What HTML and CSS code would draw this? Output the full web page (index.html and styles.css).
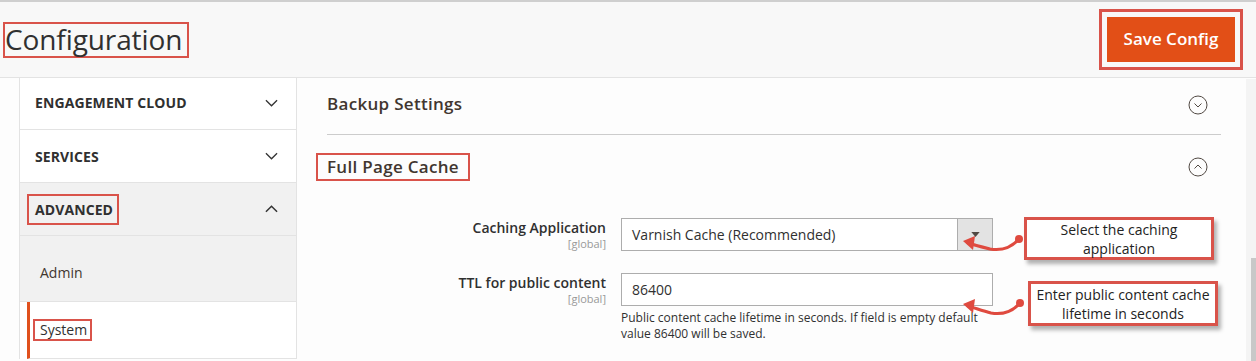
FILE: index.html
```html
<!DOCTYPE html>
<html>
<head>
<meta charset="utf-8">
<link rel="stylesheet" href="styles.css">
</head>
<body>
<div class="page">
  <header class="header">
    <h1 class="title"><span class="mark">Configuration</span></h1>
    <div class="btn-mark"><button class="save">Save Config</button></div>
  </header>
  <div class="main">
    <nav class="sidebar">
      <div class="tab"><span>ENGAGEMENT CLOUD</span><svg class="chev" viewBox="0 0 14 8"><path d="M1 1l6 6 6-6" fill="none" stroke="#333" stroke-width="1.4"/></svg></div>
      <div class="tab"><span>SERVICES</span><svg class="chev" viewBox="0 0 14 8"><path d="M1 1l6 6 6-6" fill="none" stroke="#333" stroke-width="1.4"/></svg></div>
      <div class="tab tab-open"><span class="mark mark-adv">ADVANCED</span><svg class="chev" viewBox="0 0 14 8"><path d="M1 7l6-6 6 6" fill="none" stroke="#333" stroke-width="1.6"/></svg></div>
      <div class="item">Admin</div>
      <div class="item item-active"><span class="mark mark-sys">System</span></div>
    </nav>
    <section class="content">
      <div class="section">
        <span class="sec-title">Backup Settings</span>
        <svg class="circ" viewBox="0 0 20 20"><circle cx="10" cy="10" r="9" fill="none" stroke="#514943" stroke-width="1"/><path d="M6.5 8.5l3.5 3.5 3.5-3.5" fill="none" stroke="#514943" stroke-width="1"/></svg>
      </div>
      <div class="section section-open">
        <span class="sec-title mark mark-fpc">Full Page Cache</span>
        <svg class="circ" viewBox="0 0 20 20"><circle cx="10" cy="10" r="9" fill="none" stroke="#514943" stroke-width="1"/><path d="M6.5 11.5l3.5-3.5 3.5 3.5" fill="none" stroke="#514943" stroke-width="1"/></svg>
      </div>
      <div class="form">
        <div class="row">
          <div class="label"><span class="lbl">Caching Application</span><span class="scope">[global]</span></div>
          <div class="control">
            <div class="select"><span class="sel-text">Varnish Cache (Recommended)</span><span class="sel-btn"><svg viewBox="0 0 10 6" width="9" height="5"><path d="M0 0h10L5 6z" fill="#514943"/></svg></span></div>
          </div>
        </div>
        <div class="row">
          <div class="label"><span class="lbl">TTL for public content</span><span class="scope">[global]</span></div>
          <div class="control">
            <div class="input">86400</div>
            <p class="note">Public content cache lifetime in seconds. If field is empty default value 86400 will be saved.</p>
          </div>
        </div>
        <div class="callout callout-1">Select the caching<br>application</div>
        <div class="callout callout-2">Enter public content cache<br>lifetime in seconds</div>
        <svg class="arrows" viewBox="0 0 80 120" width="80" height="120">
          <g fill="none" stroke="#df4a3f" stroke-width="3" stroke-linecap="round">
            <path d="M59 22 C52 30 42 34 30 32 C22 30 14 28 8 26"/>
            <path d="M60 86 C53 94 43 98 31 96 C23 94 15 91 8 89"/>
          </g>
          <g fill="#df4a3f">
            <circle cx="59" cy="22" r="4"/>
            <circle cx="60" cy="86" r="4"/>
            <path d="M3 24 L15 19 L13 33 Z"/>
            <path d="M3 87 L15 82 L13 96 Z"/>
          </g>
        </svg>
      </div>
    </section>
    <div class="scrollbar"><div class="thumb"></div></div>
  </div>
</div>
</body>
</html>
```
FILE: styles.css
```css
* { box-sizing: border-box; }
html, body { margin: 0; padding: 0; }
body {
  font-family: "Open Sans", "Noto Sans", sans-serif;
  color: #303030;
  background: #fdfdfd;
  width: 1256px;
  height: 361px;
  overflow: hidden;
}
.page { position: relative; }
.mark { border: 2px solid #d9534a; }
.header {
  border-top: 2px solid #cfcfcf;
  background: #f8f8f8;
  height: 78px;
  border-bottom: 1px solid #e3e3e3;
  display: flex;
  justify-content: space-between;
  align-items: flex-start;
}
.title {
  margin: 20px 0 0 3px;
  font-size: 28px;
  font-weight: 400;
  line-height: 1;
  color: #303030;
}
.title .mark {
  display: inline-block;
  padding: 2px 5px 4px 0;
  line-height: 26px;
  letter-spacing: -0.1px;
}
.btn-mark {
  margin: 7px 13px 0 0;
  border: 3px solid #d9534a;
  padding: 5px 5px;
}
.save {
  display: block;
  width: 128px;
  height: 45px;
  border: 0;
  background: #e24f17;
  color: #fff;
  font-family: "Open Sans", sans-serif;
  font-weight: 600;
  font-size: 17px;
  padding: 0 0 2px;
}
.main { display: flex; align-items: flex-start; height: 283px; }
.sidebar {
  margin-left: 19px;
  width: 278px;
  background: #fff;
  border-left: 1px solid #e3e3e3;
  border-right: 1px solid #e3e3e3;
}
.tab {
  height: 53px;
  border-bottom: 1px solid #e3e3e3;
  display: flex;
  align-items: center;
  justify-content: space-between;
  padding: 0 18px 0 15px;
  font-weight: 700;
  font-size: 14px;
  letter-spacing: 0.1px;
}
.tab:first-child { height: 52px; padding-bottom: 2px; }
.tab-open { background: #f1f1f1; }
.mark-adv { padding: 4px 4px 4px 6px; margin-left: -8px; }
.chev { width: 13px; height: 8px; }
.item {
  height: 66px;
  display: flex;
  align-items: center;
  padding-left: 20px;
  padding-top: 8px;
  font-size: 14px;
  background: #f1f1f1;
  border-bottom: 1px solid #e3e3e3;
  color: #41362f;
}
.item-active {
  background: #fff;
  border-left: 3px solid #e0501d;
  margin-left: 7px;
  padding-left: 3px;
  padding-top: 0;
  height: 57px;
  color: #303030;
}
.mark-sys { padding: 0 3px 0 5px; line-height: 18px; }
.content {
  position: relative;
  margin-left: 30px;
  width: 894px;
}
.section {
  display: flex;
  align-items: center;
  justify-content: space-between;
  height: 57px;
  border-bottom: 1px solid #cccccc;
  padding-right: 13px;
}
.section:first-child .sec-title { margin-top: -5px; }
.section:first-child .circ { margin-top: -2px; }
.section-open { border-bottom: 0; height: 64px; align-items: center; }
.sec-title {
  font-size: 17px;
  font-weight: 600;
  color: #41362f;
  letter-spacing: 0.3px;
}
.mark-fpc { margin-left: -11px; padding: 0 9px 1px 9px; margin-top: 0; }
.section-open .circ { margin-top: 0; }
.circ { width: 20px; height: 20px; }
.form { position: relative; padding-top: 19px; }
.row {
  display: grid;
  grid-template-columns: 279px 372px;
  column-gap: 15px;
  margin-bottom: 22px;
}
.label {
  display: flex;
  flex-direction: column;
  align-items: flex-end;
  padding-top: 1px;
}
.lbl { font-size: 14px; font-weight: 600; line-height: 18px; }
.scope { font-size: 11px; color: #999; line-height: 13px; }
.select, .input {
  height: 33px;
  border: 1px solid #adadad;
  background: #fff;
  font-size: 14px;
  color: #303030;
}
.select { display: flex; align-items: stretch; }
.sel-text { flex: 1; padding: 6px 10px; }
.sel-btn {
  width: 35px;
  background: #e3e3e3;
  border-left: 1px solid #adadad;
  display: flex;
  align-items: center;
  justify-content: center;
}
.input { padding: 6px 10px; }
.note {
  margin: 4px 0 0;
  font-size: 12px;
  line-height: 16px;
  color: #303030;
}
.callout {
  position: absolute;
  background: #fff;
  border: 3px solid #d9534a;
  box-shadow: 3px 4px 4px rgba(0,0,0,0.3);
  text-align: center;
  font-size: 14px;
  line-height: 19px;
  color: #222;
}
.callout-1 { left: 697px; top: 18px; width: 190px; height: 43px; padding-top: 0; }
.callout-2 { left: 701px; top: 82px; width: 190px; height: 45px; padding-top: 1px; }
.arrows { position: absolute; left: 633px; top: 18px; }
.scrollbar {
  position: absolute;
  right: 0;
  top: 79px;
  width: 10px;
  height: 282px;
  background: #f4f4f4;
}
.thumb { margin-top: 179px; margin-left: 5px; width: 5px; height: 103px; background: #c8c8c8; }
```
